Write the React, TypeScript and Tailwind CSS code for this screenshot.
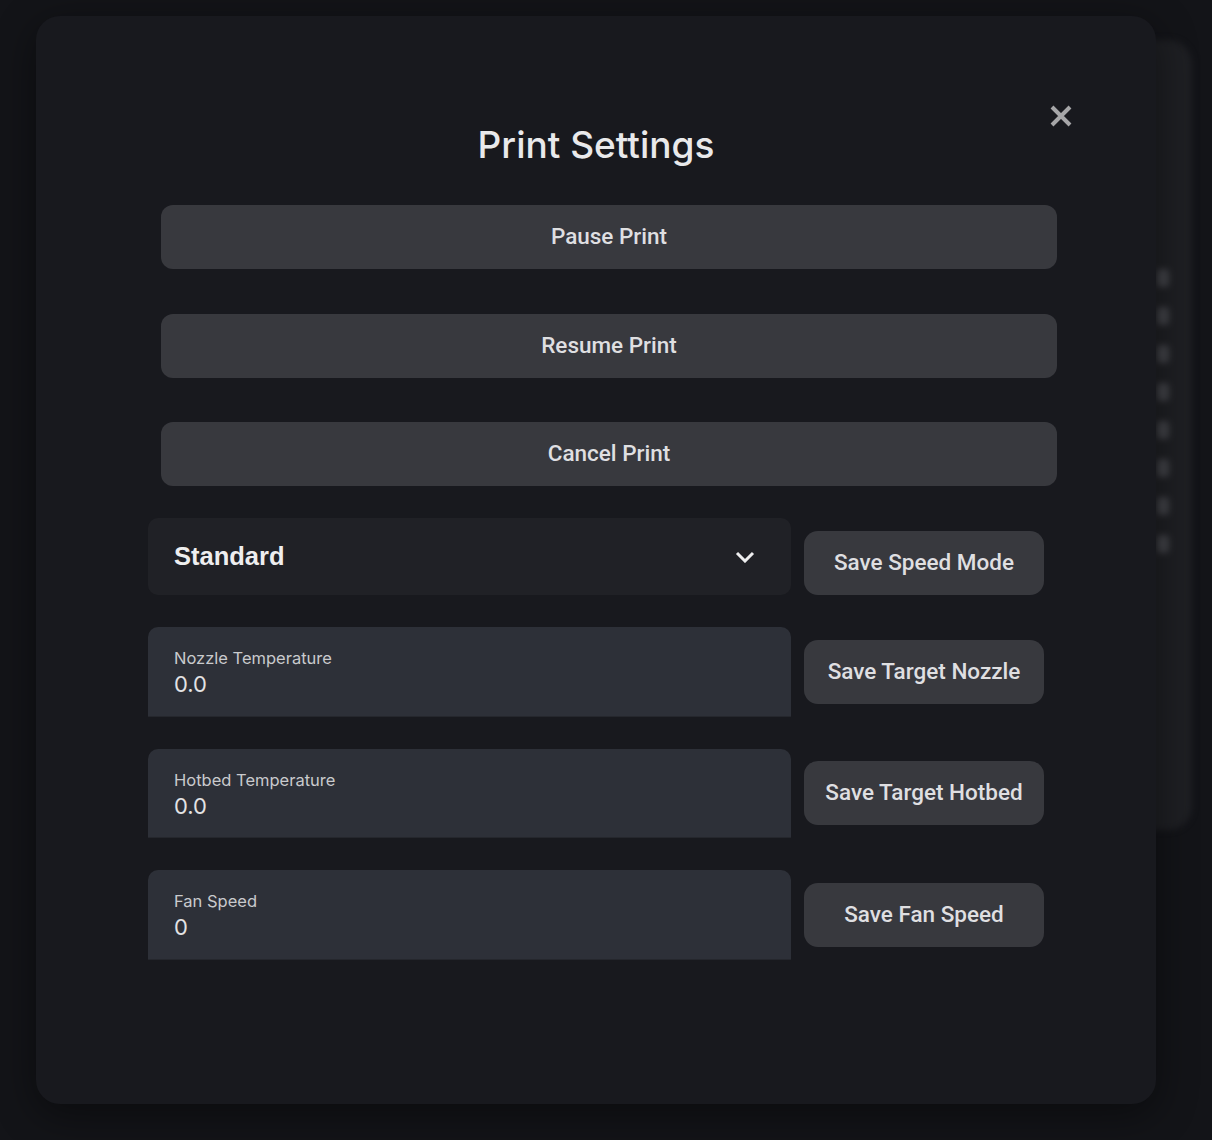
import React, { useState } from 'react';

const actions = ['Pause Print', 'Resume Print', 'Cancel Print'];

const fields = [
  { label: 'Nozzle Temperature', value: '0.0', button: 'Save Target Nozzle' },
  { label: 'Hotbed Temperature', value: '0.0', button: 'Save Target Hotbed' },
  { label: 'Fan Speed', value: '0', button: 'Save Fan Speed' },
];

export default function App() {
  const [mode] = useState('Standard');

  return (
    <div className="relative w-full h-[1140px] overflow-hidden bg-[#131418] pt-[16px] pl-[36px]">
      {/* blurred page card behind the dialog */}
      <div className="absolute left-[700px] top-[40px] w-[492px] h-[790px] rounded-[24px] bg-[#1e1f23] blur-[3px]">
        <div className="absolute left-[457px] top-[229px] flex flex-col gap-[20px]">
          {[0, 1, 2, 3, 4, 5, 6, 7].map((i) => (
            <div key={i} className="w-[12px] h-[18px] rounded bg-[#404146]" />
          ))}
        </div>
      </div>

      {/* dialog */}
      <div
        className="relative w-[1120px] h-[1088px] rounded-[24px] bg-[#18191e] pt-[106px] shadow-[0_10px_40px_rgba(0,0,0,0.45)]"
        style={{ fontFamily: 'Roboto, sans-serif' }}
      >
        <button className="absolute right-[83px] top-[88px] w-[24px] h-[24px] flex items-center justify-center text-[#a6a6a8]">
          <svg width="24" height="24" viewBox="0 0 24 24" fill="none" stroke="currentColor" strokeWidth="4">
            <path d="M3 3L21 21M21 3L3 21" />
          </svg>
        </button>

        <h2
          className="text-center text-[37px] leading-[46px] font-medium text-[#e9e9eb]"
          style={{ fontFamily: 'Inter, sans-serif' }}
        >
          Print Settings
        </h2>

        <div className="ml-[125px] w-[896px] mt-[37px] flex flex-col gap-[44.5px]">
          {actions.map((a) => (
            <button
              key={a}
              className="h-[64px] w-full rounded-[12px] bg-[#38393e] text-[22.5px] font-medium text-[#dfdfe1]"
            >
              {a}
            </button>
          ))}
        </div>

        <div className="ml-[112px] w-[896px] mt-[32px] flex flex-col gap-[32px]">
          {/* speed mode */}
          <div className="flex items-end gap-[13px]">
            <div className="w-[643px] h-[77px] rounded-[10px] bg-[#202126] flex items-center justify-between pl-[26px] pr-[36px]">
              <span
                className="text-[25.5px] font-bold text-[#eeeeef]"
                style={{ fontFamily: '"Liberation Sans", Arial, sans-serif' }}
              >
                {mode}
              </span>
              <svg width="20" height="12" viewBox="0 0 20 12" fill="none" stroke="#eeeeef" strokeWidth="3">
                <path d="M2 2L10 10L18 2" />
              </svg>
            </div>
            <button className="w-[240px] h-[64px] rounded-[14px] bg-[#38393e] text-[22.5px] font-medium text-[#dfdfe1]">
              Save Speed Mode
            </button>
          </div>

          {fields.map((f) => (
            <div key={f.label} className="flex items-center gap-[13px]">
              <div
                className="w-[643px] h-[89.5px] rounded-t-[10px] bg-[#2d3038] border-b border-[#25272d] pl-[26px] pt-[21px]"
                style={{ fontFamily: 'Inter, sans-serif' }}
              >
                <div className="text-[16.5px] leading-[20px] text-[#c9cacd]">{f.label}</div>
                <div className="mt-[3px] text-[22px] leading-[26px] text-[#e2e2e4]">{f.value}</div>
              </div>
              <button className="w-[240px] h-[64px] rounded-[14px] bg-[#38393e] text-[22.5px] font-medium text-[#dfdfe1]">
                {f.button}
              </button>
            </div>
          ))}
        </div>
      </div>
    </div>
  );
}
